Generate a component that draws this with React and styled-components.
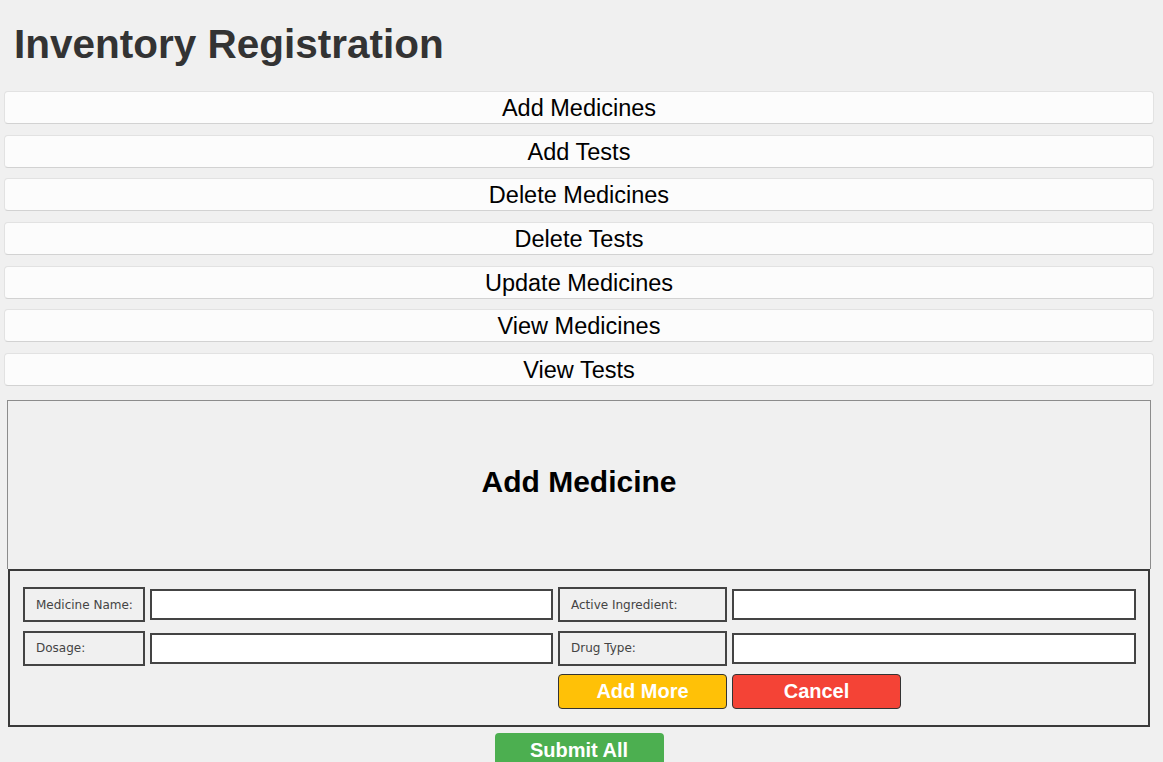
import React from 'react';
import styled, { createGlobalStyle } from 'styled-components';

const GlobalStyle = createGlobalStyle`
    html, body {
        margin: 0;
        padding: 0;
        background: #f0f0f0;
        font-family: "Liberation Sans", Arial, sans-serif;
    }
`;

const Page = styled.div`
    width: 1163px;
    padding-top: 21px;
`;

const Title = styled.h1`
    margin: 0 0 24px 14px;
    font-size: 40.5px;
    line-height: 46px;
    font-weight: bold;
    color: #333;
`;

const Menu = styled.div`
    display: flex;
    flex-direction: column;
    gap: 10.7px;
    margin-left: 4px;
    width: 1150px;
`;

const MenuButton = styled.button`
    height: 33px;
    background: #fcfcfc;
    border: 1px solid #e2e2e2;
    border-bottom-color: #d2d2d2;
    border-radius: 4px;
    font-family: "Liberation Sans", Arial, sans-serif;
    font-size: 23.5px;
    line-height: 31px;
    color: #000;
    padding: 1px 0 0;
    cursor: pointer;
`;

const Panel = styled.div`
    margin: 14px 0 0 7px;
    width: 1144px;
    height: 169px;
    box-sizing: border-box;
    border: 1px solid #8c8c8c;
    border-bottom: none;
    padding-bottom: 7px;
    display: flex;
    align-items: center;
    justify-content: center;
`;

const PanelTitle = styled.h2`
    margin: 0;
    font-size: 30px;
    font-weight: bold;
    color: #000;
`;

const FormBox = styled.div`
    margin-left: 8px;
    width: 1142px;
    box-sizing: border-box;
    border: 2px solid #3a3a3a;
    padding: 16px 12px 16px 13px;
`;

const Grid = styled.div`
    display: grid;
    grid-template-columns: 122px 403px 169px 404px;
    grid-auto-rows: 35px;
    column-gap: 5px;
    row-gap: 8.5px;
    align-items: center;
`;

const Label = styled.div`
    height: 35px;
    box-sizing: border-box;
    border: 2px solid #444;
    background: #f0f0f0;
    display: flex;
    align-items: center;
    padding-left: 11px;
    font-family: "DejaVu Sans", Tahoma, sans-serif;
    font-size: 12px;
    color: #444;
`;

const Input = styled.input`
    height: 31px;
    box-sizing: border-box;
    border: 2px solid #444;
    background: #fff;
    margin: 0;
    padding: 0 6px;
    outline: none;
`;

const ActionButton = styled.button`
    grid-column: ${(p) => p.$col};
    width: 169px;
    height: 35px;
    border: 1px solid #333;
    border-radius: 4px;
    background: ${(p) => p.$bg};
    color: #fff;
    font-family: "Liberation Sans", Arial, sans-serif;
    font-size: 20px;
    font-weight: bold;
    padding: 0;
    cursor: pointer;
`;

const SubmitRow = styled.div`
    display: flex;
    justify-content: center;
    width: 1158px;
    margin-top: 6px;
`;

const SubmitButton = styled.button`
    width: 169px;
    height: 34px;
    border: none;
    border-radius: 4px;
    background: #4caf50;
    color: #fff;
    font-family: "Liberation Sans", Arial, sans-serif;
    font-size: 20px;
    font-weight: bold;
    cursor: pointer;
`;

const menuItems = [
    'Add Medicines',
    'Add Tests',
    'Delete Medicines',
    'Delete Tests',
    'Update Medicines',
    'View Medicines',
    'View Tests'
];

const App = () => {
    return (
        <Page>
            <GlobalStyle />
            <Title>Inventory Registration</Title>
            <Menu>
                {menuItems.map((item) => (
                    <MenuButton key={item}>{item}</MenuButton>
                ))}
            </Menu>
            <Panel>
                <PanelTitle>Add Medicine</PanelTitle>
            </Panel>
            <FormBox>
                <Grid>
                    <Label>Medicine Name:</Label>
                    <Input type="text" />
                    <Label>Active Ingredient:</Label>
                    <Input type="text" />
                    <Label>Dosage:</Label>
                    <Input type="text" />
                    <Label>Drug Type:</Label>
                    <Input type="text" />
                    <ActionButton $col={3} $bg="#ffc107">Add More</ActionButton>
                    <ActionButton $col={4} $bg="#f44336">Cancel</ActionButton>
                </Grid>
            </FormBox>
            <SubmitRow>
                <SubmitButton>Submit All</SubmitButton>
            </SubmitRow>
        </Page>
    );
};

export default App;
